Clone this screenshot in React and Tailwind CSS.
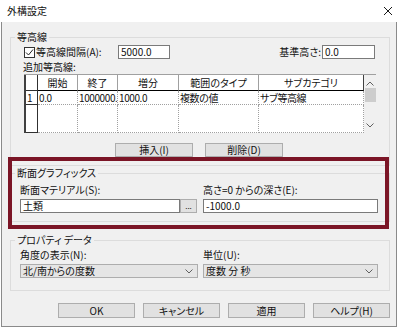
import React from 'react';

const Group = ({ label, className = '', children }) => (
  <div className={`relative ml-[8px] w-[380px] border border-[#dcdcdc] ${className}`}>
    <span className="absolute -top-[7px] left-[4px] bg-[#f0f0f0] px-[2px] leading-[12px]">{label}</span>
    {children}
  </div>
);

const TextBox = ({ value, className = '' }) => (
  <div className={`flex h-[14px] items-center border border-[#7a7a7a] bg-white pl-[2px] leading-[12px] ${className}`}>
    {value}
  </div>
);

const Button = ({ children, className = '' }) => (
  <div className={`flex items-center justify-center border border-[#adadad] bg-[#e1e1e1] leading-[12px] ${className}`}>
    {children}
  </div>
);

const Chevron = ({ up = false }) => (
  <svg width="8" height="5" viewBox="0 0 8 5">
    <path d={up ? 'M0.5 4.5L4 1L7.5 4.5' : 'M0.5 0.5L4 4L7.5 0.5'} fill="none" stroke="#606060" strokeWidth="1" />
  </svg>
);

const Combo = ({ value, className = '' }) => (
  <div className={`flex h-[14px] items-center justify-between border border-[#adadad] bg-[#e5e5e5] pl-[2px] pr-[4px] leading-[12px] ${className}`}>
    <span>{value}</span>
    <Chevron />
  </div>
);

const headers = ['開始', '終了', '増分', '範囲のタイプ', 'サブカテゴリ'];
const row = ['0.0', '1000000.', '1000.0', '複数の値', 'サブ等高線'];

const Grid = () => (
  <div className="ml-[13px] mt-[1px] flex h-[59px] w-[352px] border-t border-[#a0a0a0] bg-white">
    <div className="grid h-full grid-cols-[12px_40px_40px_61px_80px_105px] grid-rows-[16px_14px_28px] border-l-2 border-[#404040]">
      <div className="border-r border-b border-[#303030] bg-white" />
      {headers.map((h, i) => (
        <div
          key={h}
          className={`flex items-center justify-center border-b border-r border-b-black ${i === 4 ? 'border-r-[#404040]' : 'border-r-[#a0a0a0]'} leading-[12px]`}
        >
          {h}
        </div>
      ))}
      <div className="flex items-center border-r border-b border-[#303030] pl-[1px] leading-[12px]">1</div>
      {row.map((c) => (
        <div key={c} className="flex items-center overflow-hidden whitespace-nowrap border-r border-b border-dotted border-[#a0a0a0] pl-[1px] leading-[12px] tracking-[-0.4px]">
          {c}
        </div>
      ))}
      <div className="border-r border-b border-[#303030]" />
      {headers.map((h) => (
        <div key={h + 'e'} className="border-r border-b border-dotted border-[#a0a0a0]" />
      ))}
    </div>
    <div className="flex h-full w-[14px] flex-col items-center bg-[#f0f0f0]">
      <div className="mt-[6px]"><Chevron up /></div>
      <div className="mt-[2px] h-[14px] w-[11px] bg-[#cdcdcd]" />
      <div className="mt-auto mb-[5px]"><Chevron /></div>
    </div>
  </div>
);

export default function App() {
  return (
    <div className="relative h-[327px] w-[400px] bg-white text-[10px] text-[#111] font-['Noto_Sans_CJK_JP','Noto_Sans',sans-serif] [font-feature-settings:'palt']">
      <div className="flex h-[22px] items-center justify-between pl-[7px] pr-[7px]">
        <span className="leading-[12px]">外構設定</span>
        <svg width="10" height="10" viewBox="0 0 10 10">
          <path d="M1 1L9 9M9 1L1 9" stroke="#1a1a1a" strokeWidth="1" />
        </svg>
      </div>

      <div className="ml-[1px] flex h-[305px] w-[396px] flex-col border-x border-b border-[#8a8a8a] bg-[#f0f0f0]">
        <Group label="等高線" className="mt-[15px] h-[129px]">
          <div className="mt-[7px] flex h-[14px] items-center pl-[13px] pr-[14px]">
            <div className="flex w-[94px] items-center">
              <div className="mr-[1px] flex h-[11px] w-[11px] items-center justify-center border border-[#333] bg-white">
                <svg width="9" height="9" viewBox="0 0 9 9">
                  <path d="M1 4.5L3.5 7L8 1.5" fill="none" stroke="#222" strokeWidth="1" />
                </svg>
              </div>
              <span className="leading-[12px]">等高線間隔(A):</span>
            </div>
            <TextBox value="5000.0" className="w-[52px]" />
            <span className="ml-auto mr-[1px] leading-[12px]">基準高さ:</span>
            <TextBox value="0.0" className="w-[53px]" />
          </div>
          <div className="mt-[2px] pl-[12px] leading-[12px]">追加等高線:</div>
          <Grid />
          <div className="mt-[10px] flex gap-[12px] pl-[104px]">
            <Button className="h-[14px] w-[78px]">挿入(I)</Button>
            <Button className="h-[14px] w-[78px]">削除(D)</Button>
          </div>
        </Group>

        <Group label="断面グラフィックス" className="mt-[7px] h-[49px]">
          <div className="mt-[10px] flex pl-[9px]">
            <div className="w-[183px]">
              <div className="leading-[12px]">断面マテリアル(S):</div>
              <div className="mt-[3px] flex">
                <TextBox value="土類" className="w-[160px]" />
                <Button className="h-[14px] w-[17px] text-[8px]">...</Button>
              </div>
            </div>
            <div className="w-[175px]">
              <div className="leading-[12px]">高さ=0 からの深さ(E):</div>
              <TextBox value="-1000.0" className="mt-[3px] w-[175px]" />
            </div>
          </div>
        </Group>

        <Group label="プロパティ データ" className="mt-[18px] h-[51px]">
          <div className="mt-[8px] flex pl-[9px]">
            <div className="w-[183px]">
              <div className="leading-[12px]">角度の表示(N):</div>
              <Combo value="北/南からの度数" className="mt-[3px] w-[178px]" />
            </div>
            <div className="w-[175px]">
              <div className="leading-[12px]">単位(U):</div>
              <Combo value="度数 分 秒" className="mt-[3px] w-[175px]" />
            </div>
          </div>
        </Group>

        <div className="mt-[12px] flex justify-end gap-[8px] pr-[6px]">
          <Button className="h-[15px] w-[77px] border-[#0078d7]">OK</Button>
          <Button className="h-[15px] w-[77px]">キャンセル</Button>
          <Button className="h-[15px] w-[77px]">適用</Button>
          <Button className="h-[15px] w-[77px]">ヘルプ(H)</Button>
        </div>
      </div>

      <div className="pointer-events-none absolute left-[8px] top-[157px] h-[72px] w-[381px] border-4 border-[#7b1526]" />
    </div>
  );
}
